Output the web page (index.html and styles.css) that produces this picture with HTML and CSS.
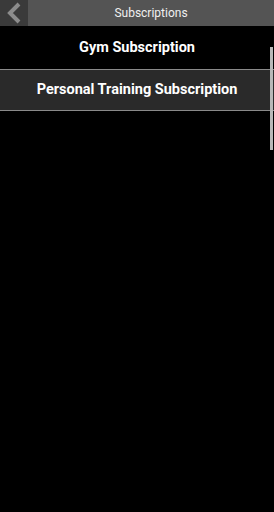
FILE: index.html
```html
<!DOCTYPE html>
<html lang="en">
<head>
    <meta charset="UTF-8">
    <meta name="viewport" content="width=device-width, initial-scale=1.0">
    <title>Subscriptions</title>
    <link rel="stylesheet" href="styles.css">
</head>
<body>
    <div class="screen">
        <!-- Top bar -->
        <div class="topbar">
            <div class="back">
                <svg width="16" height="24" viewBox="0 0 16 24">
                    <polyline points="13,3 4,12 13,21" fill="none" stroke="#8c8c8c" stroke-width="4"/>
                </svg>
            </div>
            <div class="title">Subscriptions</div>
        </div>

        <!-- List -->
        <div class="list">
            <div class="item">Gym Subscription</div>
            <div class="item selected">Personal Training Subscription</div>
        </div>

        <div class="scrollbar"></div>
    </div>
</body>
</html>
```

FILE: styles.css
```css
* {
    margin: 0;
    padding: 0;
    box-sizing: border-box;
}

body {
    font-family: Roboto, 'Noto Sans', sans-serif;
    background: #000;
    color: #fff;
    width: 274px;
    height: 512px;
    overflow: hidden;
}

.screen {
    position: relative;
    height: 512px;
}

.topbar {
    display: flex;
    height: 26px;
    background: #545454;
}

.back {
    width: 28px;
    background: #3a3a3a;
    display: flex;
    align-items: center;
    justify-content: center;
}

.title {
    flex: 1;
    text-align: center;
    font-size: 12px;
    line-height: 26px;
    color: #f0f0f0;
}

.item {
    height: 44px;
    line-height: 43px;
    text-align: center;
    font-weight: bold;
    font-size: 14.5px;
    border-bottom: 1px solid #8a8a8a;
}

.item.selected {
    height: 41px;
    line-height: 40px;
    background: #2a2a2a;
}

.scrollbar {
    position: absolute;
    right: 1px;
    top: 47px;
    width: 3px;
    height: 103px;
    background: #b8b8b8;
}
```
